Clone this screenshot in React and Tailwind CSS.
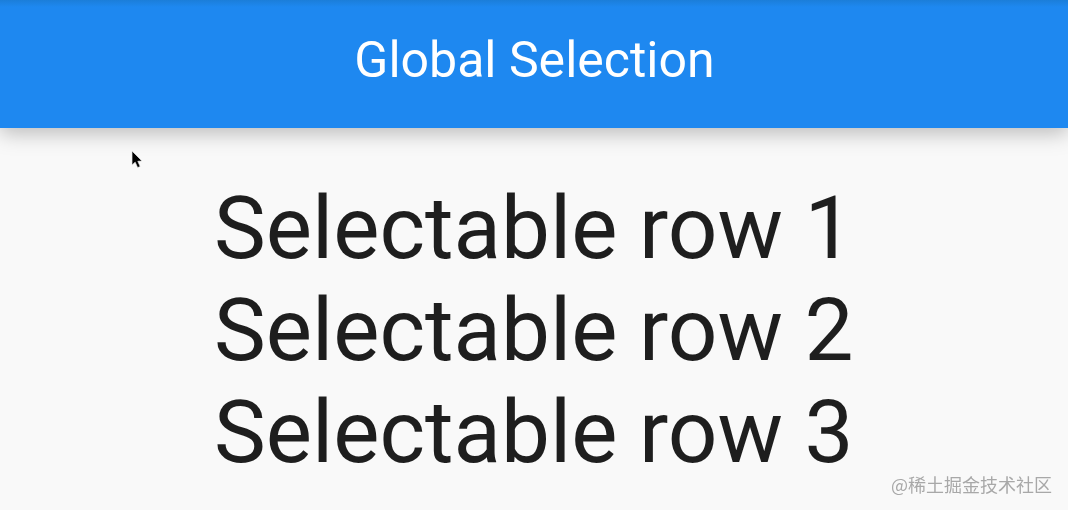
const rows = ["Selectable row 1", "Selectable row 2", "Selectable row 3"];

const Cursor = () => (
  <svg
    className="absolute left-[129px] top-[149px]"
    width="16"
    height="22"
    viewBox="0 0 16 22"
  >
    <path
      d="M3 2 L3 16 L6.2 13.2 L8.6 18.6 L11.2 17.5 L8.8 12.3 L13 12 Z"
      fill="#000"
      stroke="#e8e8e8"
      strokeWidth="0.7"
    />
  </svg>
);

export default function App() {
  return (
    <div className="relative flex h-[510px] w-[1068px] flex-col overflow-hidden bg-[#f9f9f9] font-['Roboto',sans-serif]">
      <header className="z-10 flex h-[128px] shrink-0 justify-center bg-[linear-gradient(#1b7ed9,#1e88f0_7px)] pl-[1px] pt-[30px] shadow-[0_5px_20px_rgba(0,0,0,0.26)]">
        <h1 className="text-[50px] font-normal leading-[60px] text-white">
          Global Selection
        </h1>
      </header>

      <main className="flex flex-1 flex-col pl-[214px] pt-[49px]">
        {rows.map((row) => (
          <p key={row} className="text-[87.2px] leading-[102px] text-[#1e1e1e]">
            {row}
          </p>
        ))}
      </main>

      <Cursor />

      <span className="absolute bottom-[15px] right-[16px] font-['Noto_Sans_CJK_SC',sans-serif] text-[18px] leading-[22px] text-[#a8a8a8] blur-[0.4px]">
        @稀土掘金技术社区
      </span>
    </div>
  );
}
